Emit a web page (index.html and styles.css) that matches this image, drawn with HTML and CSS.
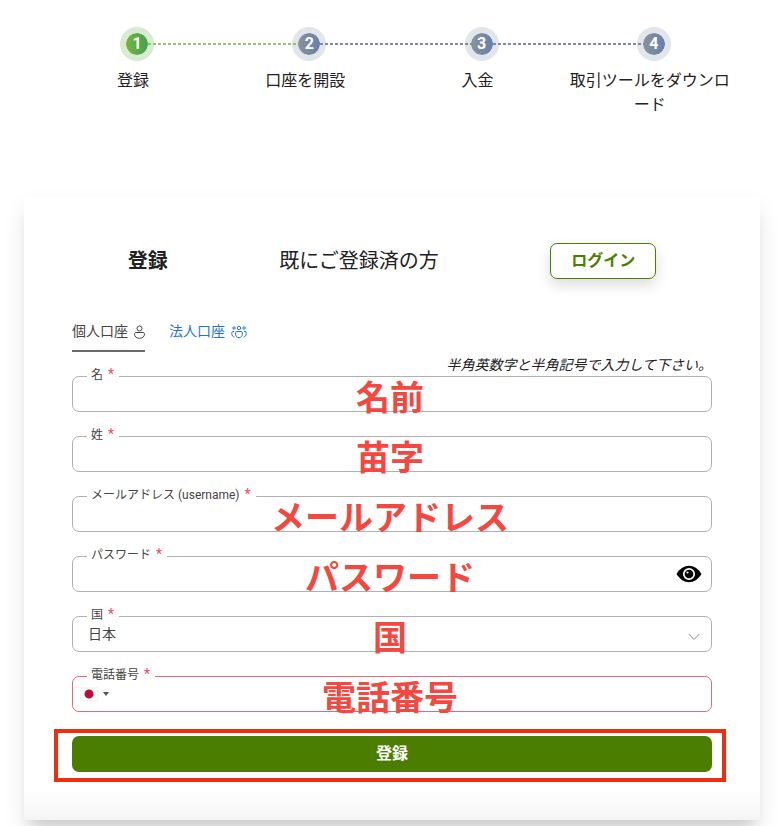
FILE: index.html
```html
<!DOCTYPE html>
<html lang="ja">
<head>
  <meta charset="UTF-8">
  <meta name="viewport" content="width=device-width, initial-scale=1.0">
  <title>登録</title>
  <link rel="stylesheet" href="styles.css">
</head>
<body>

  <ol class="steps">
    <li class="step active"><span class="step-circle">1</span><span class="step-label">登録</span></li>
    <li class="step"><span class="step-circle">2</span><span class="step-label">口座を開設</span></li>
    <li class="step"><span class="step-circle">3</span><span class="step-label">入金</span></li>
    <li class="step"><span class="step-circle">4</span><span class="step-label">取引ツールをダウンロード</span></li>
  </ol>

  <main class="card">
    <div class="card-header">
      <h1>登録</h1>
      <span class="registered">既にご登録済の方</span>
      <button type="button" class="login-btn">ログイン</button>
    </div>

    <nav class="tabs">
      <a href="#personal" class="tab current">個人口座
        <svg width="11" height="14" viewBox="0 0 11 14" fill="none" stroke="currentColor">
          <circle cx="5.500" cy="3.500" r="2.500"/>
          <path d="M2 7.500h7c1 0 1.500.7 1.500 1.600C10.500 11.500 8.500 13.300 5.500 13.300S.5 11.500.5 9.100c0-.9.500-1.600 1.500-1.600z"/>
        </svg>
      </a>
      <a href="#corporate" class="tab">法人口座
        <svg width="16" height="14" viewBox="0 0 16 14" fill="none" stroke="currentColor">
          <circle cx="8" cy="3" r="1.700"/>
          <circle cx="3" cy="3" r="1.200"/>
          <circle cx="13" cy="3" r="1.200"/>
          <path d="M5.800 6.500h4.400c.8 0 1.200.4 1.200 1.200v1.300C11.400 11.300 10 12.700 8 12.700S4.600 11.300 4.600 9V7.700c0-.8.4-1.200 1.200-1.200z"/>
          <path d="M3 6.500H2C1.200 6.500.8 7 .8 7.700v1c0 1.800 1 3.100 2.700 3.300M13 6.500h1c.8 0 1.200.5 1.200 1.200v1c0 1.800-1 3.100-2.700 3.300"/>
        </svg>
      </a>
    </nav>

    <form>
      <p class="hint">半角英数字と半角記号で入力して下さい。</p>

      <div class="field">
        <label for="firstName">名 <span class="required">*</span></label>
        <input type="text" id="firstName">
        <span class="note">名前</span>
      </div>
      <div class="field">
        <label for="lastName">姓 <span class="required">*</span></label>
        <input type="text" id="lastName">
        <span class="note">苗字</span>
      </div>
      <div class="field">
        <label for="email">メールアドレス (username) <span class="required">*</span></label>
        <input type="email" id="email">
        <span class="note">メールアドレス</span>
      </div>
      <div class="field">
        <label for="password">パスワード <span class="required">*</span></label>
        <input type="password" id="password">
        <svg class="eye" width="26" height="18" viewBox="0 0 26 18">
          <path d="M.5 9C4 3.500 8.200.8 13 .8S22 3.500 25.500 9C22 14.500 17.800 17.200 13 17.200S4 14.500.5 9z"/>
          <circle cx="13" cy="9" r="5.200" stroke="#fff" stroke-width="1.700"/>
          <circle cx="11.500" cy="7.500" r="1.100" fill="#fff"/>
        </svg>
        <span class="note">パスワード</span>
      </div>
      <div class="field">
        <label for="country">国 <span class="required">*</span></label>
        <select id="country">
          <option selected>日本</option>
        </select>
        <svg class="chevron" width="12" height="8" viewBox="0 0 12 8" fill="none" stroke="#888">
          <path d="M.7 1L6 6.500 11.300 1"/>
        </svg>
        <span class="note">国</span>
      </div>
      <div class="field error">
        <label for="phone">電話番号 <span class="required">*</span></label>
        <input type="tel" id="phone">
        <span class="flag"></span>
        <span class="note">電話番号</span>
      </div>

      <div class="submit-row">
        <button type="submit" class="submit-btn">登録</button>
      </div>
    </form>
  </main>

</body>
</html>
```

FILE: styles.css
```css
* {
  box-sizing: border-box;
}

body {
  margin: 0;
  padding: 27px 22px 6px 24px;
  font-family: Roboto, "Noto Sans CJK JP", sans-serif;
  font-size: 16px;
  color: #212121;
  background: #fff;
}

/* progress steps */
.steps {
  display: grid;
  grid-template-columns: repeat(4, 1fr);
  list-style: none;
  min-height: 90px;
  margin: 0 24px 80px 23px;
  padding: 0;
}

.step {
  position: relative;
  display: flex;
  flex-direction: column;
  align-items: center;
  gap: 8px;
  text-align: center;
}

.step-circle {
  position: relative;
  z-index: 1;
  width: 34px;
  height: 34px;
  margin-left: 8px;
  border: 6px solid #e2e5e9;
  border-radius: 50%;
  background: linear-gradient(90deg, #8b929a, #6580ae);
  background-clip: padding-box;
  color: #fff;
  font-weight: bold;
  line-height: 22px;
}

.step.active .step-circle {
  border-color: #d9ead3;
  background: linear-gradient(90deg, #74b63c, #479f50);
  background-clip: padding-box;
}

.step:not(:last-child)::after {
  content: "";
  position: absolute;
  top: 16px;
  left: calc(50% + 15px);
  width: calc(100% - 22px);
  height: 2px;
  z-index: 2;
  background: repeating-linear-gradient(90deg, #8288a2 0 3px, transparent 3px 5px);
}

.step.active::after {
  background: repeating-linear-gradient(90deg, #96c373 0 3px, transparent 3px 5px);
}

.step-label {
  line-height: 24px;
  padding: 0 4px;
  line-break: anywhere;
}

/* card */
.card {
  padding: 46px 48px 48px;
  border-radius: 4px;
  background: linear-gradient(#fff calc(100% - 30px), #f4f4f4);
  box-shadow: 0 12px 26px rgba(0, 0, 0, 0.08), 0 14px 14px -6px rgba(0, 0, 0, 0.14);
}

.card-header {
  display: flex;
  justify-content: space-around;
  align-items: center;
  font-size: 20px;
}

h1 {
  margin: 0;
  font-size: 20px;
}

h1,
.registered {
  padding-bottom: 3px;
}

button {
  height: 36px;
  padding: 0 20px 4px;
  border-radius: 7px;
  font-family: inherit;
  font-size: 16px;
  font-weight: bold;
  cursor: pointer;
}

.login-btn {
  border: 1px solid #4b7d00;
  background: #fff;
  color: #4b7d00;
  box-shadow: 0 6px 14px rgba(0, 0, 0, 0.14);
}

.tabs {
  display: flex;
  gap: 24px;
  margin-top: 40px;
  font-size: 14px;
}

.tab {
  display: flex;
  align-items: center;
  gap: 6px;
  height: 33px;
  padding-bottom: 10px;
  border-bottom: 2px solid transparent;
  color: #1f76d2;
  text-decoration: none;
}

.tab svg {
  margin-top: 5px;
}

.tab.current {
  border-color: #6b6b6b;
  color: #444;
}

.hint {
  margin: 3px 0 1px;
  font-size: 14px;
  font-style: italic;
  line-height: 20px;
  text-align: right;
}

/* form fields */
.field {
  position: relative;
  margin-bottom: 24px;
}

.field label {
  position: absolute;
  top: -11px;
  left: 15px;
  padding: 0 5px 0 4px;
  background: #fff;
  color: #444;
  font-size: 12px;
  line-height: 20px;
}

.required {
  margin-left: 2px;
  color: #f0476a;
  font-size: 14px;
  line-height: 12px;
}

.field input,
.field select {
  display: block;
  width: 100%;
  height: 36px;
  padding: 0 15px;
  border: 1px solid #b0b0b0;
  border-radius: 7px;
  background: #fff;
  color: #444;
  font-family: inherit;
  font-size: 14px;
  appearance: none;
}

.field.error input {
  padding-left: 44px;
  border-color: #e0697a;
}

.note {
  position: absolute;
  inset: 7px 4px 0 0;
  display: flex;
  align-items: center;
  justify-content: center;
  color: #f4473f;
  font-size: 34px;
  font-weight: bold;
  line-height: 36px;
  pointer-events: none;
}

.eye {
  position: absolute;
  top: 9px;
  right: 10px;
}

.chevron {
  position: absolute;
  top: 17px;
  right: 12px;
}

.flag {
  position: absolute;
  top: 11px;
  left: 8px;
  width: 18px;
  height: 14px;
  border: 1px solid #f5f5f5;
  background: radial-gradient(circle, #bc0f37 4px, transparent 5px);
}

.flag::after {
  content: "";
  position: absolute;
  top: 4px;
  left: 22px;
  border: 3px solid transparent;
  border-top: 4px solid #555;
}

.submit-row {
  position: relative;
}

/* frame around the submit button */
.submit-row::after {
  content: "";
  position: absolute;
  inset: -7px -14px -10px -18px;
  border: 4px solid #f22d0d;
  pointer-events: none;
}

.submit-btn {
  display: block;
  width: 100%;
  border: none;
  background: #4b7d00;
  color: #fff;
}
```
